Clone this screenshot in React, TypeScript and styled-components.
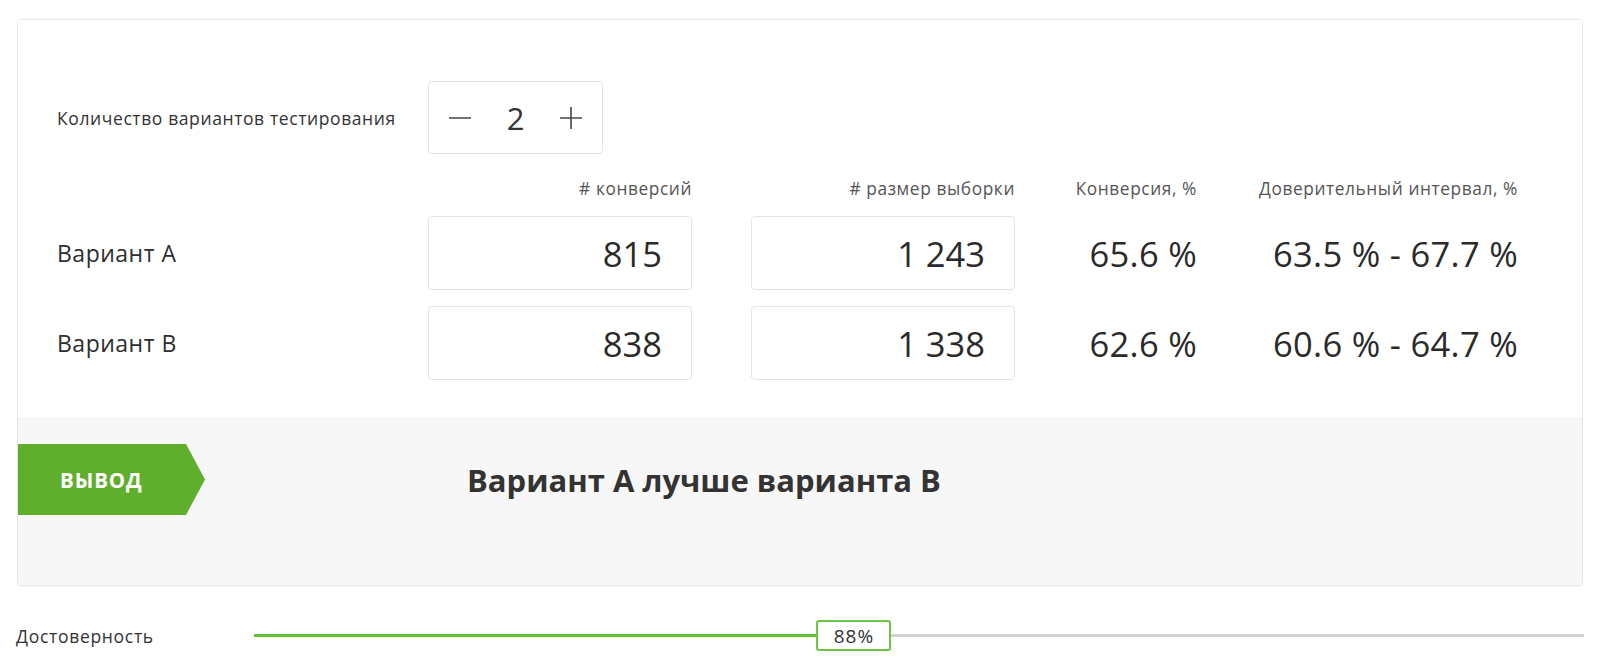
import React from "react";
import styled, { createGlobalStyle } from "styled-components";

const GlobalStyle = createGlobalStyle`
  html, body { margin: 0; padding: 0; background: #ffffff; }
  body { font-family: "Open Sans", "Noto Sans", "Liberation Sans", sans-serif; color: #2e2e2e; }
  * { box-sizing: border-box; }
`;

const Page = styled.div`
  width: 1598px;
  padding: 19px 15px 0 17px;
`;

const Card = styled.div`
  border: 1px solid #e6e6e6;
  border-radius: 4px;
  overflow: hidden;
  box-shadow: 0 1px 1px rgba(0, 0, 0, 0.04);
`;

const TopSection = styled.div`
  padding: 61px 0 37px 39px;
  background: #ffffff;
`;

const StepperRow = styled.div`
  display: flex;
  align-items: center;
`;

const SmallLabel = styled.div`
  width: 371px;
  font-size: 17.5px;
  letter-spacing: 0.6px;
  color: #333;
  white-space: nowrap;
`;

const Stepper = styled.div`
  width: 175px;
  height: 73px;
  border: 1px solid #e4e4e4;
  border-radius: 4px;
  display: flex;
  align-items: center;
  justify-content: space-between;
  padding: 0 18px 0 18px;
`;

const StepButton = styled.button`
  border: none;
  background: none;
  padding: 0;
  width: 26px;
  height: 26px;
  display: flex;
  align-items: center;
  justify-content: center;
  cursor: pointer;
`;

const StepValue = styled.span`
  font-size: 31px;
  color: #333;
`;

const Table = styled.div`
  display: grid;
  grid-template-columns: 371px 264px 323px 182px 321px;
  row-gap: 16px;
  margin-top: 24px;
  align-items: center;
`;

const HeaderCell = styled.div`
  font-size: 17.3px;
  letter-spacing: 0.6px;
  line-height: 22px;
  color: #555;
  text-align: right;
  white-space: nowrap;
`;

const RowLabel = styled.div`
  font-size: 23px;
  letter-spacing: 0.5px;
  color: #2e2e2e;
`;

const NumberBox = styled.div`
  width: 264px;
  height: 74px;
  justify-self: end;
  border: 1px solid #e4e4e4;
  border-radius: 4px;
  display: flex;
  align-items: center;
  justify-content: flex-end;
  padding-right: 29px;
  font-size: 34.5px;
  color: #2a2a2a;
`;

const ValueCell = styled.div`
  text-align: right;
  font-size: 34.5px;
  letter-spacing: 0.3px;
  color: #2a2a2a;
  white-space: nowrap;
`;

const ResultSection = styled.div`
  background: #f7f7f7;
  height: 168px;
  padding-top: 27px;
  display: flex;
  align-items: flex-start;
`;

const Ribbon = styled.div`
  width: 187px;
  height: 71px;
  background: #5fae2c;
  clip-path: polygon(0 0, 168px 0, 100% 50%, 168px 100%, 0 100%);
  color: #ffffff;
  font-weight: 700;
  font-size: 20.5px;
  letter-spacing: 0.9px;
  display: flex;
  align-items: center;
  padding-left: 42px;
`;

const ResultText = styled.div`
  height: 71px;
  display: flex;
  align-items: center;
  margin-left: 262px;
  font-size: 31px;
  font-weight: 700;
  color: #333;
`;

const SliderRow = styled.div`
  display: flex;
  align-items: center;
  height: 31px;
  margin-top: 34px;
  margin-left: -1px;
`;

const SliderLabel = styled.div`
  width: 238px;
  font-size: 17.5px;
  letter-spacing: 0.7px;
  color: #333;
`;

const Track = styled.div`
  position: relative;
  flex: 1;
  height: 3px;
  background: #d2d2d2;
  margin-right: -1px;
`;

const Fill = styled.div`
  height: 100%;
  background: #5ec236;
`;

const Thumb = styled.div`
  position: absolute;
  z-index: 1;
  top: -14px;
  width: 75px;
  height: 31px;
  margin-left: -37px;
  background: #ffffff;
  border: 2px solid #6cc644;
  border-radius: 3px;
  display: flex;
  align-items: center;
  justify-content: center;
  font-size: 19px;
  letter-spacing: 1px;
  color: #333;
`;

const MinusIcon = () => (
  <svg width="24" height="24" viewBox="0 0 24 24">
    <line x1="1" y1="12" x2="23" y2="12" stroke="#444" strokeWidth="1.6" />
  </svg>
);

const PlusIcon = () => (
  <svg width="24" height="24" viewBox="0 0 24 24">
    <line x1="1" y1="12" x2="23" y2="12" stroke="#444" strokeWidth="1.6" />
    <line x1="12" y1="1" x2="12" y2="23" stroke="#444" strokeWidth="1.6" />
  </svg>
);

const rows = [
  { name: "Вариант А", conv: "815", size: "1 243", rate: "65.6 %", ci: "63.5 % - 67.7 %" },
  { name: "Вариант В", conv: "838", size: "1 338", rate: "62.6 %", ci: "60.6 % - 64.7 %" },
];

export default function App() {
  const pos = 45.07;
  return (
    <>
      <GlobalStyle />
      <Page>
        <Card>
          <TopSection>
            <StepperRow>
              <SmallLabel>Количество вариантов тестирования</SmallLabel>
              <Stepper>
                <StepButton aria-label="minus"><MinusIcon /></StepButton>
                <StepValue>2</StepValue>
                <StepButton aria-label="plus"><PlusIcon /></StepButton>
              </Stepper>
            </StepperRow>
            <Table>
              <div />
              <HeaderCell># конверсий</HeaderCell>
              <HeaderCell># размер выборки</HeaderCell>
              <HeaderCell>Конверсия, %</HeaderCell>
              <HeaderCell>Доверительный интервал, %</HeaderCell>
              {rows.map((r) => (
                <React.Fragment key={r.name}>
                  <RowLabel>{r.name}</RowLabel>
                  <NumberBox>{r.conv}</NumberBox>
                  <NumberBox>{r.size}</NumberBox>
                  <ValueCell>{r.rate}</ValueCell>
                  <ValueCell>{r.ci}</ValueCell>
                </React.Fragment>
              ))}
            </Table>
          </TopSection>
          <ResultSection>
            <Ribbon>ВЫВОД</Ribbon>
            <ResultText>Вариант А лучше варианта В</ResultText>
          </ResultSection>
        </Card>
        <SliderRow>
          <SliderLabel>Достоверность</SliderLabel>
          <Track>
            <Fill style={{ width: `${pos}%` }} />
            <Thumb style={{ left: `${pos}%` }}>88%</Thumb>
          </Track>
        </SliderRow>
      </Page>
    </>
  );
}
